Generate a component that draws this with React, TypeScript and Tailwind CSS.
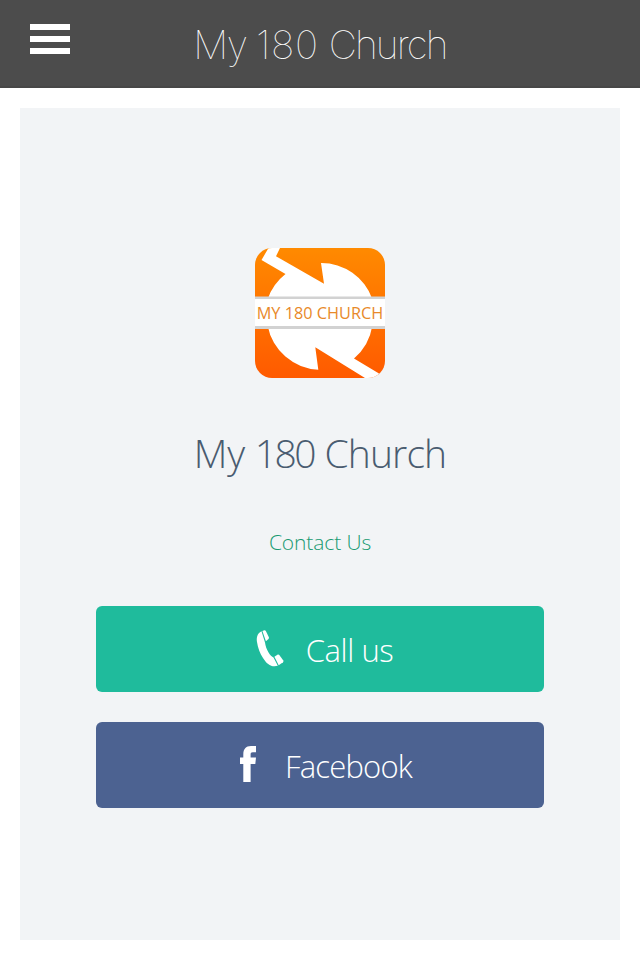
const AppLogo = () => {
    return (
        <svg width="130" height="130" viewBox="0 0 130 130">
            <defs>
                <linearGradient id="orange" x1="0" y1="0" x2="0" y2="1">
                    <stop offset="0" stopColor="#ff8a00" />
                    <stop offset="1" stopColor="#ff5a00" />
                </linearGradient>
                <clipPath id="tile">
                    <rect width="130" height="130" rx="17" />
                </clipPath>
            </defs>
            <g clipPath="url(#tile)">
                <rect width="130" height="130" fill="url(#orange)" />
                <path
                    fill="#fff"
                    d="M13.500 0L6.500 12L30.500 26A54 54 0 0 0 12.7 51V78A54 54 0 0 0 63.3 121.7L60.3 99.3L110 130H121L124 125.500L99 110.500A54 54 0 0 0 117.3 78V51A54 54 0 0 0 66 15L69 35.7L21 8.3L25 0Z"
                />
                <rect y="48.5" width="130" height="32.5" fill="#d2d2d2" />
                <rect y="51" width="130" height="27" fill="#fff" />
            </g>
            <text
                x="1.7"
                y="70.500"
                fill="#e8892a"
                fontSize="16"
                textLength="126.500"
                lengthAdjust="spacingAndGlyphs"
                className="font-['Open_Sans',sans-serif]"
            >
                MY 180 CHURCH
            </text>
        </svg>
    )
}

const PhoneIcon = () => {
    return (
        <svg width="28" height="38" viewBox="0 0 28 38" fill="#fff">
            <path d="M5.500 1.300C1 3.500 .3 8 1 12C1.800 17.500 4 23.500 7 28C11 34.500 15.500 37.500 21.800 35.800L17.500 27.500C14.500 26.500 9.800 19.500 9 12.500Z" />
            <path d="M6.400 .9L8.300 .2Q9.300 0 9.800 .9L12.900 7.300Q13.200 8.200 12.500 8.900L9.900 11.300Z" />
            <path d="M18.400 26.700L21.800 24.500Q22.700 24.200 23.300 24.900L27.300 30.600Q27.700 31.500 27 32.300L22.700 35.200Z" />
        </svg>
    )
}

const FacebookIcon = () => {
    return (
        <svg width="17" height="36" viewBox="0 0 17 36" fill="#fff">
            <path d="M3.300 36V18H0V11.600H3.300V8.500C3.300 3 5.800 0 11 0H16V6.300H12.800C11 6.300 10.600 7 10.600 8.700V11.600H16L15.300 18H10.600V36Z" />
        </svg>
    )
}

const Header = () => {
    return (
        <header className="relative flex h-[88px] items-center justify-center border-b-2 border-[#474747] bg-[#4c4c4c]">
            <button type="button" aria-label="Menu" className="absolute left-[30px] top-6 flex flex-col gap-1.5">
                <span className="h-1.5 w-10 bg-white" />
                <span className="h-1.5 w-10 bg-white" />
                <span className="h-1.5 w-10 bg-white" />
            </button>
            <h1 className="pt-1 font-['Inter',sans-serif] text-[39px] font-thin leading-[48px] text-white">
                <span className="tracking-[-1.500px]">My </span>
                <span className="tracking-[0.8px]">180 </span>
                <span className="-ml-0.5 tracking-[-1.900px]">Church</span>
            </h1>
        </header>
    )
}

export default function App() {
    return (
        <div className="flex h-[960px] w-[640px] flex-col bg-white font-['Open_Sans','Noto_Sans',sans-serif]">
            <Header />
            <main className="m-5 flex flex-1 flex-col items-center bg-[#f2f4f6] pt-[140px]">
                <AppLogo />
                <h2 className="mt-[47px] text-[39px] font-[340] leading-[56px] text-[#4a5c70]">
                    <span className="tracking-[-0.3px]">My </span>
                    <span className="tracking-[-2.500px]">180 </span>
                    <span className="ml-[3px] tracking-[-0.9px]">Church</span>
                </h2>
                <p className="mt-[45px] text-[21px] font-[340] leading-[32px] tracking-[-0.1px] text-[#189a72]">Contact Us</p>
                <button type="button" className="mt-12 flex h-[86px] w-[448px] items-center justify-center gap-[22px] rounded-md bg-[#1fbb9c] pl-[9px] text-white">
                    <PhoneIcon />
                    <span className="pt-0.5 text-[31px] font-[340] leading-10 tracking-[-0.4px]">Call us</span>
                </button>
                <button type="button" className="mt-[30px] flex h-[86px] w-[448px] items-center justify-center gap-7 rounded-md bg-[#4c6291] pb-0.5 pl-3 text-white">
                    <FacebookIcon />
                    <span className="pt-1 text-[31px] font-[340] leading-10 tracking-[-0.8px]">Facebook</span>
                </button>
            </main>
        </div>
    )
}
